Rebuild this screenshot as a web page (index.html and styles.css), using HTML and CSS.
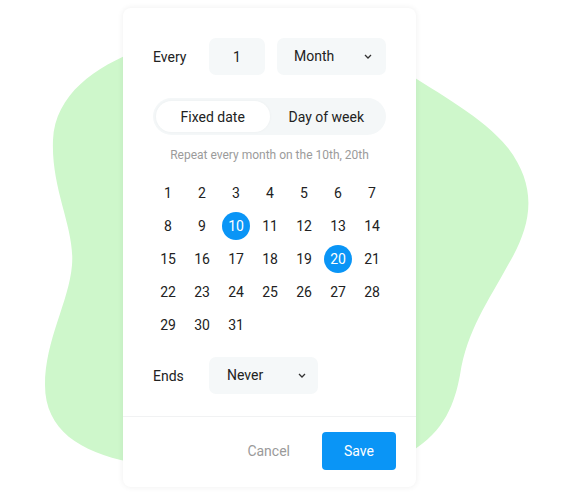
FILE: index.html
```html
<!DOCTYPE html>
<html>
<head>
<meta charset="utf-8">
<link rel="stylesheet" href="styles.css">
</head>
<body>
<div class="stage">
  <svg class="blob" width="566" height="494" viewBox="0 0 566 494">
    <path d="M140,50 C95,66 55,95 53,140 C51,190 75,228 72,265 C69,302 45,340 45,385 C45,430 80,452 130,462 L410,452 C445,432 455,402 460,375 C467,330 488,302 508,265 C530,228 540,190 508,148 C482,116 440,95 400,68 Z" fill="#cef7cb"/>
  </svg>
  <div class="card">
    <div class="body">
      <div class="row">
        <span class="label">Every</span>
        <div class="box num">1</div>
        <div class="box select month"><span>Month</span>
          <svg class="chev" width="8" height="5" viewBox="0 0 8 5"><polyline points="1,1 4,4 7,1" fill="none" stroke="#333" stroke-width="1.3"/></svg>
        </div>
      </div>
      <div class="segment">
        <div class="seg active">Fixed date</div>
        <div class="seg">Day of week</div>
      </div>
      <p class="hint">Repeat every month on the 10th, 20th</p>
      <div class="grid">
        <span class="d">1</span><span class="d">2</span><span class="d">3</span><span class="d">4</span><span class="d">5</span><span class="d">6</span><span class="d">7</span>
        <span class="d">8</span><span class="d">9</span><span class="d sel">10</span><span class="d">11</span><span class="d">12</span><span class="d">13</span><span class="d">14</span>
        <span class="d">15</span><span class="d">16</span><span class="d">17</span><span class="d">18</span><span class="d">19</span><span class="d sel">20</span><span class="d">21</span>
        <span class="d">22</span><span class="d">23</span><span class="d">24</span><span class="d">25</span><span class="d">26</span><span class="d">27</span><span class="d">28</span>
        <span class="d">29</span><span class="d">30</span><span class="d">31</span>
      </div>
      <div class="row ends">
        <span class="label">Ends</span>
        <div class="box select never"><span>Never</span>
          <svg class="chev" width="8" height="5" viewBox="0 0 8 5"><polyline points="1,1 4,4 7,1" fill="none" stroke="#333" stroke-width="1.3"/></svg>
        </div>
      </div>
    </div>
    <div class="footer">
      <button class="cancel">Cancel</button>
      <button class="save">Save</button>
    </div>
  </div>
</div>
</body>
</html>
```

FILE: styles.css
```css
* { box-sizing: border-box; }
html, body { margin: 0; padding: 0; background: #fff; }
body { font-family: Roboto, "Noto Sans", sans-serif; color: #222; font-size: 14px; }
.stage { position: relative; width: 566px; height: 494px; overflow: hidden; }
.blob { position: absolute; left: 0; top: 0; z-index: 0; }
.card {
  position: relative; z-index: 1;
  margin-left: 123px; margin-top: 8px;
  width: 293px; height: 479px;
  background: #fff; border-radius: 8px;
  box-shadow: 0 0 6px rgba(0,0,0,0.07);
  display: flex; flex-direction: column;
}
.body { padding: 30px 30px 22px 30px; border-bottom: 1px solid #f1f2f3; }
.row { display: flex; align-items: center; gap: 12px; height: 37px; }
.label { width: 44px; font-size: 14px; color: #222; }
.box { background: #f5f8f9; border-radius: 7px; height: 37px; display: flex; align-items: center; font-size: 14px; }
.num { width: 56px; justify-content: center; }
.select { justify-content: space-between; padding: 0 14px 0 17px; }
.select span { position: relative; top: -1px; }
.month { width: 109px; }
.never { width: 109px; padding-left: 18px; padding-right: 12px; }
.chev { display: block; }
.segment {
  margin-top: 23px; height: 37px; border-radius: 19px;
  background: #f4f7f8; padding: 3px; display: flex;
}
.seg { flex: 1; display: flex; align-items: center; justify-content: center; border-radius: 16px; font-size: 14px; color: #222; }
.seg.active { background: #fff; box-shadow: 0 0 3px rgba(0,0,0,0.04); }
.hint { margin: 12px 0 0 0; text-align: center; font-size: 12px; line-height: 16px; color: #9b9b9b; }
.grid {
  margin: 13px 0 0 -2px;
  display: grid; grid-template-columns: repeat(7, 34px); grid-auto-rows: 33px;
}
.d { display: flex; align-items: center; justify-content: center; font-size: 14px; color: #222; }
.d.sel { position: relative; color: #fff; z-index: 0; }
.d.sel::before {
  content: ""; position: absolute; width: 28px; height: 28px; border-radius: 50%;
  background: #0a95f6; left: 3px; top: 2.5px; z-index: -1;
}
.ends { margin-top: 16px; }
.footer { flex: 1; display: flex; align-items: flex-start; justify-content: flex-end; padding: 15px 20px 0 0; gap: 16px; }
button { font-family: Roboto, "Noto Sans", sans-serif; font-size: 14px; border: none; cursor: pointer; }
.cancel { background: none; color: #9a9a9a; height: 38px; padding: 0 16px; }
.save { background: #0a95f6; color: #fff; width: 74px; height: 38px; border-radius: 4px; }
```
